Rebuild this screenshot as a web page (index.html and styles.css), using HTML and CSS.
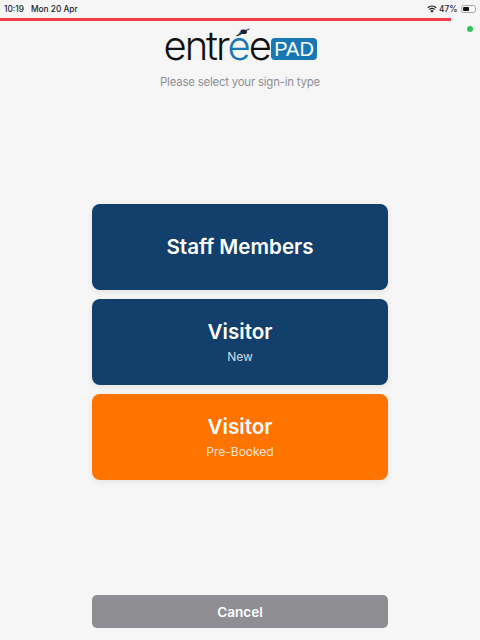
FILE: index.html
```html
<!DOCTYPE html>
<html lang="en">
<head>
<meta charset="utf-8">
<title>entréePAD sign-in</title>
<link rel="stylesheet" href="styles.css">
</head>
<body>
<main class="screen">
  <div class="status">
    <div class="status-left"><span>10:19</span><span>Mon 20 Apr</span></div>
    <div class="status-right">
      <svg class="wifi" width="10" height="8" viewBox="0 0 11 8"><path d="M5.5 8 3.7 5.9a2.8 2.8 0 0 1 3.6 0z" fill="#222"/><path d="M2.6 4.6a4.5 4.5 0 0 1 5.8 0M.8 2.6a7.2 7.2 0 0 1 9.4 0" fill="none" stroke="#222" stroke-width="1.3"/></svg>
      <span>47%</span>
      <span class="battery"><span class="battery-fill"></span></span>
    </div>
  </div>
  <div class="progress-row"><div class="progress"></div></div>
  <span class="dot"></span>
  <header class="brand">
    <div class="logo">
      <span class="word">entr<span class="blue">é</span>e<svg class="accent" width="14" height="9" viewBox="0 0 14 9"><path d="M0.5 8 6 5" stroke="#222" stroke-width="1.4" fill="none"/><ellipse cx="8" cy="3.8" rx="3" ry="2.3" fill="#222"/><path d="M10 2.4 13.5 1" stroke="#222" stroke-width="1" fill="none"/></svg></span>
      <span class="pad">PAD</span>
    </div>
    <p class="prompt">Please select your sign-in type</p>
  </header>
  <section class="choices">
    <button class="choice navy"><span class="title">Staff Members</span></button>
    <button class="choice navy"><span class="title">Visitor</span><span class="sub">New</span></button>
    <button class="choice orange"><span class="title">Visitor</span><span class="sub">Pre-Booked</span></button>
  </section>
  <footer class="foot"><button class="cancel">Cancel</button></footer>
</main>
</body>
</html>
```
FILE: styles.css
```css
* { box-sizing: border-box; }
html, body { margin: 0; height: 100%; }
body { background: #f6f6f7; font-family: Inter, "Liberation Sans", sans-serif; }
.screen { position: relative; width: 480px; height: 640px; display: flex; flex-direction: column; overflow: hidden; }
.status { height: 18px; padding: 0 4px 0 4px; display: flex; justify-content: space-between; align-items: center; font-size: 8.3px; font-weight: 500; color: #222; }
.status-left { display: flex; gap: 7px; }
.status-right { display: flex; align-items: center; gap: 2.5px; }
.battery { position: relative; width: 15px; height: 8px; border: 1px solid #aaa; border-radius: 2.5px; padding: 1px; display: flex; margin-left: 1px; }
.battery-fill { width: 50%; background: #111; border-radius: 1px; }
.progress-row { height: 4px; }
.progress { width: 451px; height: 3px; background: #f63c4a; }
.dot { position: absolute; left: 467px; top: 26px; width: 6px; height: 6px; border-radius: 50%; background: #2fc45a; }
.brand { display: flex; flex-direction: column; align-items: center; height: 182px; }
.logo { display: flex; align-items: center; height: 38px; margin-top: 5px; margin-left: 1px; gap: 1px; }
.word { position: relative; font-family: Inter, "Liberation Sans", sans-serif; font-size: 40px; font-weight: 300; line-height: 38px; letter-spacing: -2.1px; color: #111; }
.blue { color: #1878b4; }
.accent { position: absolute; left: 72px; top: 1px; }
.pad { background: #1878b4; color: #fff; font-family: "Liberation Sans", sans-serif; font-size: 20px; line-height: 22px; height: 22px; padding: 0 3.5px; border-radius: 4px; margin-top: 5px; }
.prompt { margin: 9px 0 0; font-size: 11.4px; letter-spacing: -0.2px; line-height: 16px; color: #8e8e93; }
.choices { display: flex; flex-direction: column; align-items: center; gap: 9.5px; }
.choice { width: 296px; height: 85.5px; border: 0; border-radius: 8px; padding: 1px 0 0; display: flex; flex-direction: column; align-items: center; justify-content: center; color: #fff; font-family: inherit; box-shadow: 0 2px 6px rgba(0,0,0,.08); }
.navy { background: #123f6b; }
.orange { background: #ff7300; }
.title { font-size: 20.6px; line-height: 26px; font-weight: 600; }
.sub { font-size: 12px; line-height: 16px; margin-top: 4px; opacity: .8; }
.foot { margin-top: auto; display: flex; justify-content: center; padding-bottom: 12px; }
.cancel { width: 296px; height: 33px; border: 0; border-radius: 5px; background: #8e8e93; color: #fff; font-family: inherit; font-size: 13.5px; font-weight: 600; }
```
